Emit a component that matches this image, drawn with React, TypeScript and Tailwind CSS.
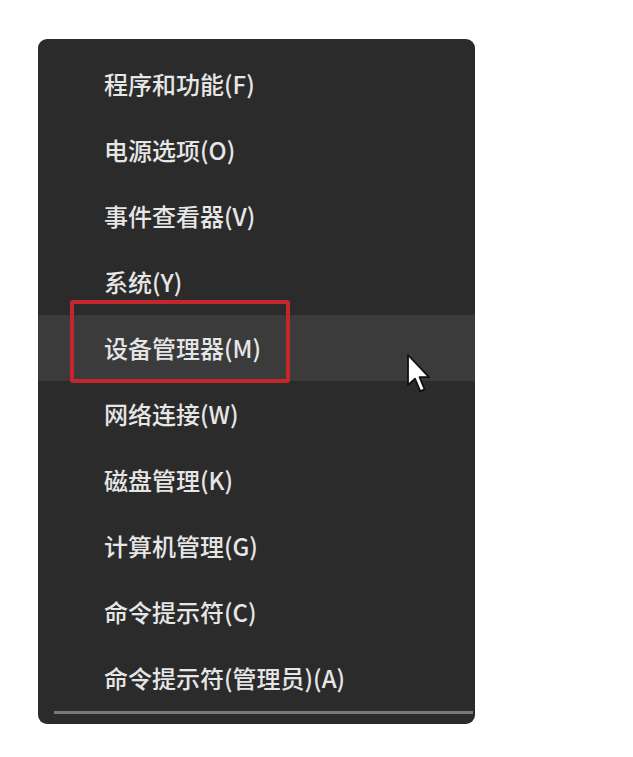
// Win+X context menu with the device manager entry marked.

const items = [
  "程序和功能(F)",
  "电源选项(O)",
  "事件查看器(V)",
  "系统(Y)",
  "设备管理器(M)",
  "网络连接(W)",
  "磁盘管理(K)",
  "计算机管理(G)",
  "命令提示符(C)",
  "命令提示符(管理员)(A)",
];

const ACTIVE = 4;

function Cursor() {
  return (
    <svg width="24" height="40" viewBox="0 0 12 20" className="absolute left-[369px] top-[39px]">
      <path
        d="M0.5 0.5 L0.5 15.5 L4 12.3 L6.6 18.6 L8.8 17.7 L6.3 11.6 L11 11.6 Z"
        fill="#ffffff"
        stroke="#111111"
        strokeWidth="0.9"
        strokeLinejoin="round"
      />
    </svg>
  );
}

export default function App() {
  return (
    <div className="min-h-screen bg-white pt-[39px] pl-[38px]">
      <div
        className="relative w-[437px] rounded-[9px] bg-[#2b2b2b] pt-[12px] pb-[10px] text-[#e6e6e6]"
        style={{ fontFamily: '"Noto Sans CJK SC", "Noto Sans", sans-serif' }}
      >
        {items.map((label, i) => (
          <div
            key={label}
            className={`relative flex h-[66px] items-center pl-[66px] text-[24px] font-medium leading-none ${
              i === ACTIVE ? "bg-[#3b3b3b]" : ""
            }`}
          >
            <span className="-mt-[1px]">{label}</span>
            {i === ACTIVE && (
              <>
                <div className="absolute left-[32px] top-[-15px] h-[83px] w-[220px] rounded-[3px] border-[4px] border-[#c4262c]" />
                <Cursor />
              </>
            )}
          </div>
        ))}
        <div className="ml-[16px] mr-[2px] h-[3px] bg-[#7a7a7a]" />
      </div>
    </div>
  );
}
